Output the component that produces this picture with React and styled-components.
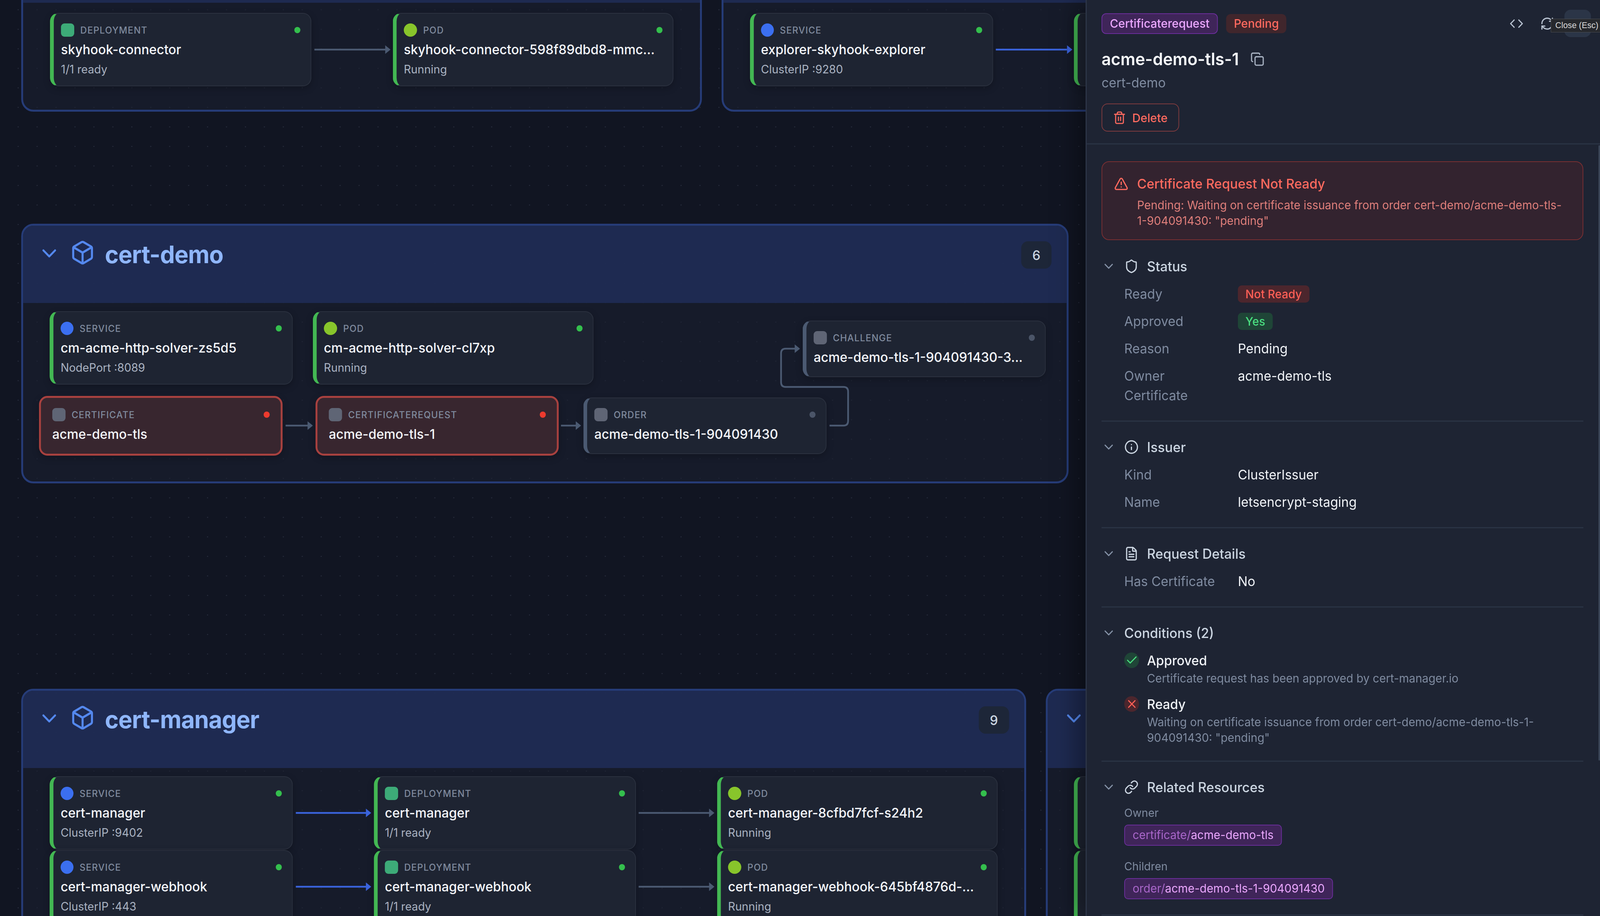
import styled, { createGlobalStyle } from "styled-components";
import {
  Box, Check, ChevronDown, Code, Copy, FileText, Info, Link, RefreshCw, Shield, Trash2, TriangleAlert, X,
} from "lucide-react";

const GlobalStyle = createGlobalStyle`
  * { box-sizing: border-box; }
  html, body { margin: 0; height: 100%; background: #111522; overflow: hidden; }
  body { font-family: Inter, "Noto Sans", sans-serif; }
  #root { height: 100%; }
`;

const DESIGN_WIDTH = 4224;
const BORDER = 5;

const groups = [
  {
    x: 56, y: -196, w: 1797, h: 482,
    nodes: [
      { kind: "deployment", label: "DEPLOYMENT", name: "skyhook-connector", sub: "1/1 ready", x: 132, y: 33, w: 690 },
      { kind: "pod", label: "POD", name: "skyhook-connector-598f89dbd8-mmc...", sub: "Running", x: 1037, y: 33, w: 741 },
    ],
  },
  {
    x: 1905, y: -196, w: 1400, h: 482,
    nodes: [
      { kind: "service", label: "SERVICE", name: "explorer-skyhook-explorer", sub: "ClusterIP :9280", x: 1980, y: 33, w: 642 },
      { stub: true, x: 2835, y: 33, w: 690 },
    ],
  },
  {
    name: "cert-demo", count: 6, x: 56, y: 573, w: 2765, h: 665,
    nodes: [
      { kind: "service", label: "SERVICE", name: "cm-acme-http-solver-zs5d5", sub: "NodePort :8089", x: 131, y: 797, w: 642 },
      { kind: "pod", label: "POD", name: "cm-acme-http-solver-cl7xp", sub: "Running", x: 826, y: 797, w: 741 },
      { kind: "other", label: "CERTIFICATE", name: "acme-demo-tls", x: 103, y: 1014, w: 643, error: true },
      { kind: "other", label: "CERTIFICATEREQUEST", name: "acme-demo-tls-1", x: 833, y: 1014, w: 642, error: true },
      { kind: "other", label: "ORDER", name: "acme-demo-tls-1-904091430", x: 1540, y: 1018, w: 642, idle: true },
      { kind: "other", label: "CHALLENGE", name: "acme-demo-tls-1-904091430-3...", x: 2119, y: 821, w: 642, idle: true },
    ],
  },
  {
    name: "cert-manager", count: 9, x: 56, y: 1764, w: 2653, h: 900,
    nodes: [
      { kind: "service", label: "SERVICE", name: "cert-manager", sub: "ClusterIP :9402", x: 131, y: 1988, w: 642 },
      { kind: "deployment", label: "DEPLOYMENT", name: "cert-manager", sub: "1/1 ready", x: 987, y: 1988, w: 692 },
      { kind: "pod", label: "POD", name: "cert-manager-8cfbd7fcf-s24h2", sub: "Running", x: 1893, y: 1988, w: 741 },
      { kind: "service", label: "SERVICE", name: "cert-manager-webhook", sub: "ClusterIP :443", x: 131, y: 2177, w: 642 },
      { kind: "deployment", label: "DEPLOYMENT", name: "cert-manager-webhook", sub: "1/1 ready", x: 987, y: 2177, w: 692 },
      { kind: "pod", label: "POD", name: "cert-manager-webhook-645bf4876d-...", sub: "Running", x: 1893, y: 2177, w: 741 },
    ],
  },
  {
    x: 2761, y: 1764, w: 900, h: 900,
    nodes: [
      { stub: true, x: 2835, y: 1988, w: 690 },
      { stub: true, x: 2835, y: 2177, w: 690 },
    ],
  },
];

const GREY = "#4b5a72";
const BLUE = "#3a63dc";

const edges = [
  { d: "M830 127H1018", color: GREY },
  { d: "M2629 127H2817", color: BLUE },
  { d: "M754 1090H813", color: GREY },
  { d: "M1481 1090H1521", color: GREY },
  { d: "M2190 1090H2227Q2239 1090 2239 1078V1003Q2239 991 2227 991H2074Q2062 991 2062 979V905Q2062 893 2074 893H2099", color: GREY },
  { d: "M781 2082H967", color: BLUE },
  { d: "M781 2271H967", color: BLUE },
  { d: "M1686 2082H1873", color: GREY },
  { d: "M1686 2271H1873", color: GREY },
];

const heads = [
  { x: 1031, y: 127, color: GREY },
  { x: 2831, y: 127, color: BLUE },
  { x: 826, y: 1090, color: GREY },
  { x: 1534, y: 1090, color: GREY },
  { x: 2112, y: 893, color: GREY },
  { x: 980, y: 2082, color: BLUE },
  { x: 980, y: 2271, color: BLUE },
  { x: 1886, y: 2082, color: GREY },
  { x: 1886, y: 2271, color: GREY },
];

const kindIcons = {
  service: { color: "#3b6ff0", radius: "50%", width: 34 },
  pod: { color: "#88c52b", radius: "50%", width: 35 },
  deployment: { color: "#3dab78", radius: "9px", width: 35 },
  other: { color: "#5f6575", radius: "9px", width: 35 },
};

export default function App() {
  // the page is drawn on a 4224 wide sheet and fitted to the window it gets
  const fit = window.innerWidth / DESIGN_WIDTH;

  return (
    <Page style={{ transform: `scaleX(${fit})` }}>
      <GlobalStyle />
      <Canvas>
        {groups.map((g, i) => (
          <Group key={i} $x={g.x} $y={g.y} $w={g.w} $h={g.h}>
            <GroupHeader>
              <GroupChevron size={62} />
              <GroupIcon size={66} />
              {g.name && <GroupTitle>{g.name}</GroupTitle>}
              {g.count && <GroupCount>{g.count}</GroupCount>}
            </GroupHeader>
            {g.nodes.map((n, j) => (
              <Node key={j} {...n} offsetX={g.x + BORDER} offsetY={g.y + BORDER} />
            ))}
          </Group>
        ))}
        <EdgeLayer width="2866" height="2346" viewBox="0 0 2866 2346">
          {edges.map((e, i) => (
            <path key={i} d={e.d} fill="none" stroke={e.color} strokeWidth="4.5" />
          ))}
          {heads.map((h, i) => (
            <polygon key={i} points={`${h.x},${h.y} ${h.x - 14},${h.y - 11} ${h.x - 14},${h.y + 11}`} fill={h.color} />
          ))}
        </EdgeLayer>
      </Canvas>

      <Panel>
        <PanelHeader>
          <TopRow>
            <Tag $kind="purple">Certificaterequest</Tag>
            <Tag $kind="red">Pending</Tag>
            <Actions>
              <ActionButton><Code size={37} /></ActionButton>
              <ActionButton><RefreshCw size={37} /></ActionButton>
              <CloseButton>
                <Tooltip>Close (Esc)</Tooltip>
              </CloseButton>
            </Actions>
          </TopRow>
          <TitleRow>
            <Title>acme-demo-tls-1</Title>
            <CopyIcon size={37} />
          </TitleRow>
          <Namespace>cert-demo</Namespace>
          <DeleteButton><Trash2 size={35} />Delete</DeleteButton>
        </PanelHeader>

        <PanelBody>
          <Alert>
            <AlertHead>
              <TriangleAlert size={38} />
              <AlertTitle>Certificate Request Not Ready</AlertTitle>
            </AlertHead>
            <AlertText>Pending: Waiting on certificate issuance from order cert-demo/acme-demo-tls-1-904091430: "pending"</AlertText>
          </Alert>

          <Section>
            <SectionHead><SmallChevron size={38} /><Shield size={38} />Status</SectionHead>
            <Rows>
              <Row><RowLabel>Ready</RowLabel><Pill $ok={false}>Not Ready</Pill></Row>
              <Row><RowLabel>Approved</RowLabel><Pill $ok>Yes</Pill></Row>
              <Row><RowLabel>Reason</RowLabel><RowValue>Pending</RowValue></Row>
              <Row><RowLabel>Owner Certificate</RowLabel><RowValue>acme-demo-tls</RowValue></Row>
            </Rows>
          </Section>

          <Section>
            <SectionHead><SmallChevron size={38} /><Info size={38} />Issuer</SectionHead>
            <Rows>
              <Row><RowLabel>Kind</RowLabel><RowValue>ClusterIssuer</RowValue></Row>
              <Row><RowLabel>Name</RowLabel><RowValue>letsencrypt-staging</RowValue></Row>
            </Rows>
          </Section>

          <Section>
            <SectionHead><SmallChevron size={38} /><FileText size={38} />Request Details</SectionHead>
            <Rows>
              <Row><RowLabel>Has Certificate</RowLabel><RowValue>No</RowValue></Row>
            </Rows>
          </Section>

          <Section>
            <SectionHead><SmallChevron size={38} />Conditions (2)</SectionHead>
            <Conditions>
              <Condition>
                <ConditionDot $ok><Check size={34} /></ConditionDot>
                <div>
                  <ConditionName>Approved</ConditionName>
                  <ConditionText>Certificate request has been approved by cert-manager.io</ConditionText>
                </div>
              </Condition>
              <Condition>
                <ConditionDot $ok={false}><X size={34} /></ConditionDot>
                <div>
                  <ConditionName>Ready</ConditionName>
                  <ConditionText>Waiting on certificate issuance from order cert-demo/acme-demo-tls-1-904091430: "pending"</ConditionText>
                </div>
              </Condition>
            </Conditions>
          </Section>

          <Section>
            <SectionHead><SmallChevron size={38} /><Link size={38} />Related Resources</SectionHead>
            <Related>
              <RelatedLabel>Owner</RelatedLabel>
              <Chip><span>certificate/</span>acme-demo-tls</Chip>
              <RelatedLabel $next>Children</RelatedLabel>
              <Chip><span>order/</span>acme-demo-tls-1-904091430</Chip>
            </Related>
          </Section>
        </PanelBody>
        <ScrollThumb />
      </Panel>
    </Page>
  );
}

function Node({ stub, kind, label, name, sub, x, y, w, error, idle, offsetX, offsetY }) {
  // cards that sit behind the details panel only show their left edge
  if (stub) return <Card $x={x - offsetX} $y={y - offsetY} $w={w} $tall />;

  const icon = kindIcons[kind];
  return (
    <Card $x={x - offsetX} $y={y - offsetY} $w={w} $error={error} $idle={idle} $tall={!!sub}>
      <CardHead>
        <KindIcon $color={icon.color} $radius={icon.radius} $width={icon.width} />
        <KindLabel>{label}</KindLabel>
        <StatusDot $error={error} $idle={idle} />
      </CardHead>
      <CardName>{name}</CardName>
      {sub && <CardSub>{sub}</CardSub>}
    </Card>
  );
}

const Page = styled.div`
  display: flex;
  width: ${DESIGN_WIDTH}px;
  height: 100vh;
  overflow: hidden;
  transform-origin: 0 0;
`;

const Canvas = styled.div`
  position: relative;
  flex: 1;
  min-width: 0;
  overflow: hidden;
  background-color: #111522;
  background-image: radial-gradient(circle, #262b3b 1.2px, transparent 1.8px);
  background-size: 50px 50px;
  background-position: 23px 0;
`;

const EdgeLayer = styled.svg`
  position: absolute;
  left: 0;
  top: 0;
  pointer-events: none;
`;

const Group = styled.section`
  position: absolute;
  left: ${(p) => p.$x}px;
  top: ${(p) => p.$y}px;
  width: ${(p) => p.$w}px;
  height: ${(p) => p.$h}px;
  border: ${BORDER}px solid #263c78;
  border-radius: 32px;
  background: rgba(27, 32, 49, 0.55);
`;

const GroupHeader = styled.header`
  display: flex;
  align-items: flex-start;
  height: 198px;
  padding: 36px 40px 0 38px;
  background: rgba(31, 44, 84, 0.94);
  border-radius: 27px 27px 0 0;
`;

const GroupChevron = styled(ChevronDown)`
  flex: none;
  margin-top: 4px;
  color: #5488ee;
`;

const GroupIcon = styled(Box)`
  flex: none;
  margin-left: 24px;
  color: #5488ee;
`;

const GroupTitle = styled.h2`
  margin: 0 0 0 26px;
  font-size: 62px;
  font-weight: 700;
  line-height: 76px;
  letter-spacing: -1px;
  color: #8fb6fb;
`;

const GroupCount = styled.div`
  display: flex;
  align-items: center;
  justify-content: center;
  width: 80px;
  height: 70px;
  margin-left: auto;
  margin-top: 4px;
  border-radius: 18px;
  background: #1d2638;
  font-size: 34px;
  font-weight: 500;
  color: #cbd5e1;
`;

const Card = styled.article`
  position: absolute;
  left: ${(p) => p.$x}px;
  top: ${(p) => p.$y}px;
  width: ${(p) => p.$w}px;
  height: ${(p) => (p.$tall ? 188 : p.$error ? 153 : 145)}px;
  padding: ${(p) => (p.$error ? "26px 29px 0 30px" : "25px 27px 0 19px")};
  border: ${(p) => (p.$error ? "5px solid #a8413f" : "2.5px solid #2b313f")};
  border-left: ${(p) => (p.$error ? "5px solid #a8413f" : `10px solid ${p.$idle ? "#4b5a72" : "#43b853"}`)};
  border-radius: 22px;
  background: ${(p) => (p.$error ? "#38262f" : "#1e2432")};
  box-shadow: 0 6px 18px rgba(0, 0, 0, 0.22);
`;

const CardHead = styled.div`
  display: flex;
  align-items: center;
  height: 34px;
`;

const KindIcon = styled.span`
  flex: none;
  width: ${(p) => p.$width}px;
  height: 34px;
  border-radius: ${(p) => p.$radius};
  background: ${(p) => p.$color};
`;

const KindLabel = styled.span`
  margin-left: 16px;
  font-size: 24px;
  font-weight: 500;
  letter-spacing: 1.3px;
  color: #7f8a9d;
`;

const StatusDot = styled.span`
  width: 16px;
  height: 16px;
  margin-left: auto;
  border-radius: 50%;
  background: ${(p) => (p.$error ? "#ee3a2e" : p.$idle ? "#4b5568" : "#34bf4d")};
`;

const CardName = styled.div`
  margin-top: 8px;
  font-size: 34px;
  font-weight: 500;
  line-height: 50px;
  white-space: nowrap;
  color: #f4f6fa;
`;

const CardSub = styled.div`
  margin-top: 5px;
  font-size: 29.5px;
  line-height: 40px;
  color: #a9b2c1;
`;

const Panel = styled.aside`
  position: relative;
  z-index: 2;
  flex: none;
  display: flex;
  flex-direction: column;
  width: 1358px;
  height: 100%;
  overflow: hidden;
  border-left: 3px solid #2d3648;
  background: #1e2433;
  box-shadow: -24px 0 60px rgba(0, 0, 0, 0.35);
`;

const PanelHeader = styled.header`
  flex: none;
  padding: 25px 24px 30px 39px;
  border-bottom: 3px solid #2a3344;
`;

const TopRow = styled.div`
  display: flex;
  align-items: center;
  gap: 22px;
`;

const Tag = styled.span`
  padding: 0 20px;
  height: ${(p) => (p.$kind === "purple" ? 53 : 49)}px;
  line-height: 49px;
  border: ${(p) => (p.$kind === "purple" ? "2px solid #6b2e9b" : "0")};
  border-radius: 12px;
  background: ${(p) => (p.$kind === "purple" ? "#3f2559" : "#40262c")};
  font-size: 30.4px;
  font-weight: 500;
  color: ${(p) => (p.$kind === "purple" ? "#eba7ff" : "#ff6a5f")};
`;

const Actions = styled.div`
  display: flex;
  gap: 11px;
  margin-left: auto;
`;

const ActionButton = styled.button`
  display: flex;
  align-items: center;
  justify-content: center;
  width: 70px;
  height: 70px;
  padding: 0;
  border: 0;
  border-radius: 16px;
  background: transparent;
  color: #b8c2d1;
`;

const CloseButton = styled(ActionButton)`
  position: relative;
  background: #2b3547;
`;

const Tooltip = styled.span`
  position: absolute;
  left: -36px;
  top: 23px;
  height: 35px;
  padding: 0 14px 0 11px;
  border: 1.5px solid #4b4d52;
  background: #26282d;
  font-family: "Liberation Sans", sans-serif;
  font-size: 22px;
  line-height: 32px;
  white-space: nowrap;
  color: #d9d9d9;
`;

const TitleRow = styled.div`
  display: flex;
  align-items: center;
  gap: 30px;
  margin-top: 26px;
`;

const Title = styled.h1`
  margin: 0;
  font-size: 43.4px;
  font-weight: 600;
  line-height: 60px;
  color: #f6f8fb;
`;

const CopyIcon = styled(Copy)`
  color: #a9b3c3;
`;

const Namespace = styled.div`
  margin-top: 9px;
  font-size: 34px;
  line-height: 44px;
  color: #7f8ba0;
`;

const DeleteButton = styled.button`
  display: flex;
  align-items: center;
  gap: 16px;
  height: 72px;
  margin-top: 31px;
  padding: 0 28px;
  border: 2.5px solid #7d3a3e;
  border-radius: 16px;
  background: transparent;
  font-family: inherit;
  font-size: 30.5px;
  font-weight: 500;
  color: #ff6a5f;
`;

const PanelBody = styled.div`
  flex: 1;
  min-height: 0;
  padding: 43px 44px 0 39px;
`;

const Alert = styled.div`
  padding: 32px 40px 28px 31px;
  border: 2.5px solid #782f32;
  border-radius: 20px;
  background: #33232f;
`;

const AlertHead = styled.div`
  display: flex;
  align-items: center;
  gap: 23px;
  color: #ff6a5f;
`;

const AlertTitle = styled.div`
  font-size: 34.4px;
  font-weight: 500;
  line-height: 48px;
`;

const AlertText = styled.div`
  margin: 10px 0 0 61px;
  font-size: 29.8px;
  line-height: 40px;
  color: #e07f7b;
`;

const Section = styled.section`
  padding: 40px 0 39px;
  border-bottom: 3px solid #2a3344;

  ${Alert} + & {
    padding-top: 42px;
  }
`;

const SectionHead = styled.div`
  display: flex;
  align-items: center;
  gap: 22px;
  height: 50px;
  font-size: 35px;
  font-weight: 500;
  color: #cbd5e1;
`;

const SmallChevron = styled(ChevronDown)`
  flex: none;
  color: #8491a6;
`;

const Rows = styled.div`
  display: flex;
  flex-direction: column;
  gap: 20px;
  margin-top: 21px;
`;

const Row = styled.div`
  display: grid;
  grid-template-columns: 300px 1fr;
  align-items: start;
  min-height: 50px;
  padding-left: 60px;
  font-size: 34px;
  line-height: 50px;
`;

const RowLabel = styled.div`
  padding-right: 50px;
  color: #7f8ba0;
`;

const RowValue = styled.div`
  color: #eff2f6;
`;

const Pill = styled.span`
  justify-self: start;
  align-self: center;
  padding: 0 20px;
  height: 44px;
  border-radius: 10px;
  background: ${(p) => (p.$ok ? "#1f4537" : "#4c262d")};
  font-size: 30px;
  font-weight: 500;
  line-height: 44px;
  color: ${(p) => (p.$ok ? "#4ade80" : "#ff5f56")};
`;

const Conditions = styled.div`
  display: flex;
  flex-direction: column;
  gap: 22px;
  margin-top: 21px;
  padding-left: 60px;
`;

const Condition = styled.div`
  display: flex;
  gap: 21px;
`;

const ConditionDot = styled.span`
  flex: none;
  display: flex;
  align-items: center;
  justify-content: center;
  width: 39px;
  height: 40px;
  margin-top: 4px;
  border-radius: 50%;
  background: ${(p) => (p.$ok ? "#1f4537" : "#4c262d")};
  color: ${(p) => (p.$ok ? "#4ade80" : "#ff5f56")};
`;

const ConditionName = styled.div`
  font-size: 34px;
  font-weight: 500;
  line-height: 50px;
  color: #eff2f6;
`;

const ConditionText = styled.div`
  font-size: 30px;
  line-height: 40px;
  color: #7f8ba0;
`;

const Related = styled.div`
  margin-top: 21px;
  padding-left: 60px;
`;

const RelatedLabel = styled.div`
  margin-top: ${(p) => (p.$next ? 33 : 0)}px;
  font-size: 29px;
  line-height: 40px;
  color: #7f8ba0;
`;

const Chip = styled.div`
  width: fit-content;
  height: 54px;
  margin-top: 10px;
  padding: 0 20px;
  border: 2.5px solid #6b2e9b;
  border-radius: 10px;
  background: #3f2559;
  font-size: 30px;
  line-height: 49px;
  color: #eba7ff;

  span {
    color: #a866c9;
  }
`;

const ScrollThumb = styled.div`
  position: absolute;
  right: 0;
  top: 372px;
  width: 4px;
  height: 1576px;
  border-radius: 2px;
  background: #3b4658;
`;
